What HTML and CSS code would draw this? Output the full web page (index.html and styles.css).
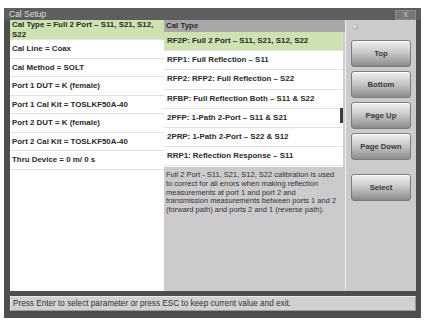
FILE: index.html
```html
<!DOCTYPE html>
<html lang="en">
<head>
    <meta charset="UTF-8">
    <title>Cal Setup</title>
    <link rel="stylesheet" href="styles.css">
</head>
<body>
    <div class="dialog">
        <div class="titlebar">
            <span class="title">Cal Setup</span>
            <span class="close">X</span>
        </div>

        <div class="main">
            <div class="params">
                <div class="param selected">Cal Type = Full 2 Port – S11, S21, S12, S22</div>
                <div class="param">Cal Line = Coax</div>
                <div class="param">Cal Method = SOLT</div>
                <div class="param">Port 1 DUT = K (female)</div>
                <div class="param">Port 1 Cal Kit = TOSLKF50A-40</div>
                <div class="param">Port 2 DUT = K (female)</div>
                <div class="param">Port 2 Cal Kit = TOSLKF50A-40</div>
                <div class="param">Thru Device = 0 m/ 0 s</div>
            </div>

            <div class="choices">
                <div class="choices-head">Cal Type</div>
                <div class="choice-list">
                    <div class="choice selected">RF2P: Full 2 Port – S11, S21, S12, S22</div>
                    <div class="choice">RFP1: Full Reflection – S11</div>
                    <div class="choice">RFP2: RFP2: Full Reflection – S22</div>
                    <div class="choice">RFBP: Full Reflection Both – S11 &amp; S22</div>
                    <div class="choice">2PFP: 1-Path 2-Port – S11 &amp; S21</div>
                    <div class="choice">2PRP: 1-Path 2-Port – S22 &amp; S12</div>
                    <div class="choice">RRP1: Reflection Response – S11</div>
                    <span class="scroll-thumb"></span>
                </div>
                <div class="description">
                    Full 2 Port - S11, S21, S12, S22 calibration is used<br>
                    to correct for all errors when making reflection<br>
                    measurements at port 1 and port 2 and<br>
                    transmission measurements between ports 1 and 2<br>
                    (forward path) and ports 2 and 1 (reverse path).
                </div>
            </div>

            <div class="buttons">
                <span class="led"></span>
                <button class="key">Top</button>
                <button class="key">Bottom</button>
                <button class="key">Page Up</button>
                <button class="key">Page Down</button>
                <button class="key select">Select</button>
            </div>
        </div>

        <div class="status">Press Enter to select parameter or press ESC to keep current value and exit.</div>
    </div>
</body>
</html>
```

FILE: styles.css
```css
body {
    margin: 0;
    background: #fff;
    font-family: 'Liberation Sans', Arial, sans-serif;
    color: #2a2a2a;
}

.dialog {
    margin: 8px 5px 0 4px;
    width: 417px;
    height: 310px;
    background: #4e4e4e;
    display: flex;
    flex-direction: column;
    box-sizing: border-box;
}

.titlebar {
    height: 12px;
    background: #5e5e5e;
    display: flex;
    align-items: center;
    justify-content: space-between;
    padding: 0 5px 0 5px;
}

.title {
    color: #dedede;
    font-size: 8.5px;
}

.close {
    width: 21px;
    height: 10px;
    margin-top: 1px;
    background: #777;
    border: 1px solid #8a8a8a;
    box-sizing: border-box;
    color: #ccc;
    font-size: 7px;
    line-height: 8px;
    text-align: center;
}

.main {
    height: 271px;
    margin: 0 5px 0 6px;
    display: grid;
    grid-template-columns: 154px 182px 70px;
}

.params {
    background: #fff;
    font-size: 7.9px;
    font-weight: bold;
}

.param {
    height: 18.5px;
    line-height: 18px;
    padding-left: 2px;
    border-bottom: 1px solid #e2e2e2;
    box-sizing: border-box;
    white-space: nowrap;
}

.param.selected {
    height: 20px;
    line-height: 10px;
    white-space: normal;
    background: #cde2b0;
    padding-right: 4px;
}

.choices {
    display: flex;
    flex-direction: column;
    border-right: 1px solid #efefef;
}

.choices-head {
    height: 12px;
    line-height: 12px;
    background: #a9a6a9;
    font-size: 7.9px;
    font-weight: bold;
    padding-left: 2px;
}

.choice-list {
    position: relative;
    height: 135px;
    background: #fff;
    border-right: 2px solid #cfcfcf;
    font-size: 7.9px;
    font-weight: bold;
}

.choice {
    height: 19.2px;
    line-height: 18px;
    padding-left: 3px;
    border-bottom: 1px solid #e2e2e2;
    box-sizing: border-box;
    white-space: nowrap;
}

.choice.selected {
    background: #cde2b0;
}

.scroll-thumb {
    position: absolute;
    right: 0;
    top: 76px;
    width: 3px;
    height: 15px;
    background: #3a3a3a;
}

.description {
    flex: 1;
    background: #cdcacd;
    padding: 4px 0 0 2px;
    font-size: 7.5px;
    line-height: 8.8px;
    color: #333;
    white-space: nowrap;
}

.buttons {
    background: #cdcacd;
    display: flex;
    flex-direction: column;
    align-items: center;
    gap: 4px;
    padding-top: 20px;
    position: relative;
}

.led {
    position: absolute;
    left: 6px;
    top: 4px;
    width: 6px;
    height: 6px;
    border-radius: 50%;
    background: radial-gradient(circle at 40% 40%, #e6e6e6, #9c9c9c);
}

.key {
    width: 60px;
    height: 27px;
    padding: 0;
    border: 1px solid #7c7c7c;
    border-radius: 3px;
    background: linear-gradient(#f0f0f0, #c9c9c9 45%, #a2a2a2 80%, #8a8a8a);
    box-shadow: inset 0 1px 0 #fff;
    font-family: 'Liberation Sans', Arial, sans-serif;
    font-size: 7.7px;
    font-weight: bold;
    color: #3a3a3a;
}

.key.select {
    margin-top: 10px;
}

.status {
    margin: 5px 5px 0 6px;
    height: 15px;
    line-height: 13px;
    background: #d3d0d3;
    border: 1px solid #e8e8e8;
    border-right-color: #9a9a9a;
    border-bottom-color: #9a9a9a;
    box-sizing: border-box;
    padding-left: 2px;
    font-size: 8.2px;
    color: #333;
}
```
